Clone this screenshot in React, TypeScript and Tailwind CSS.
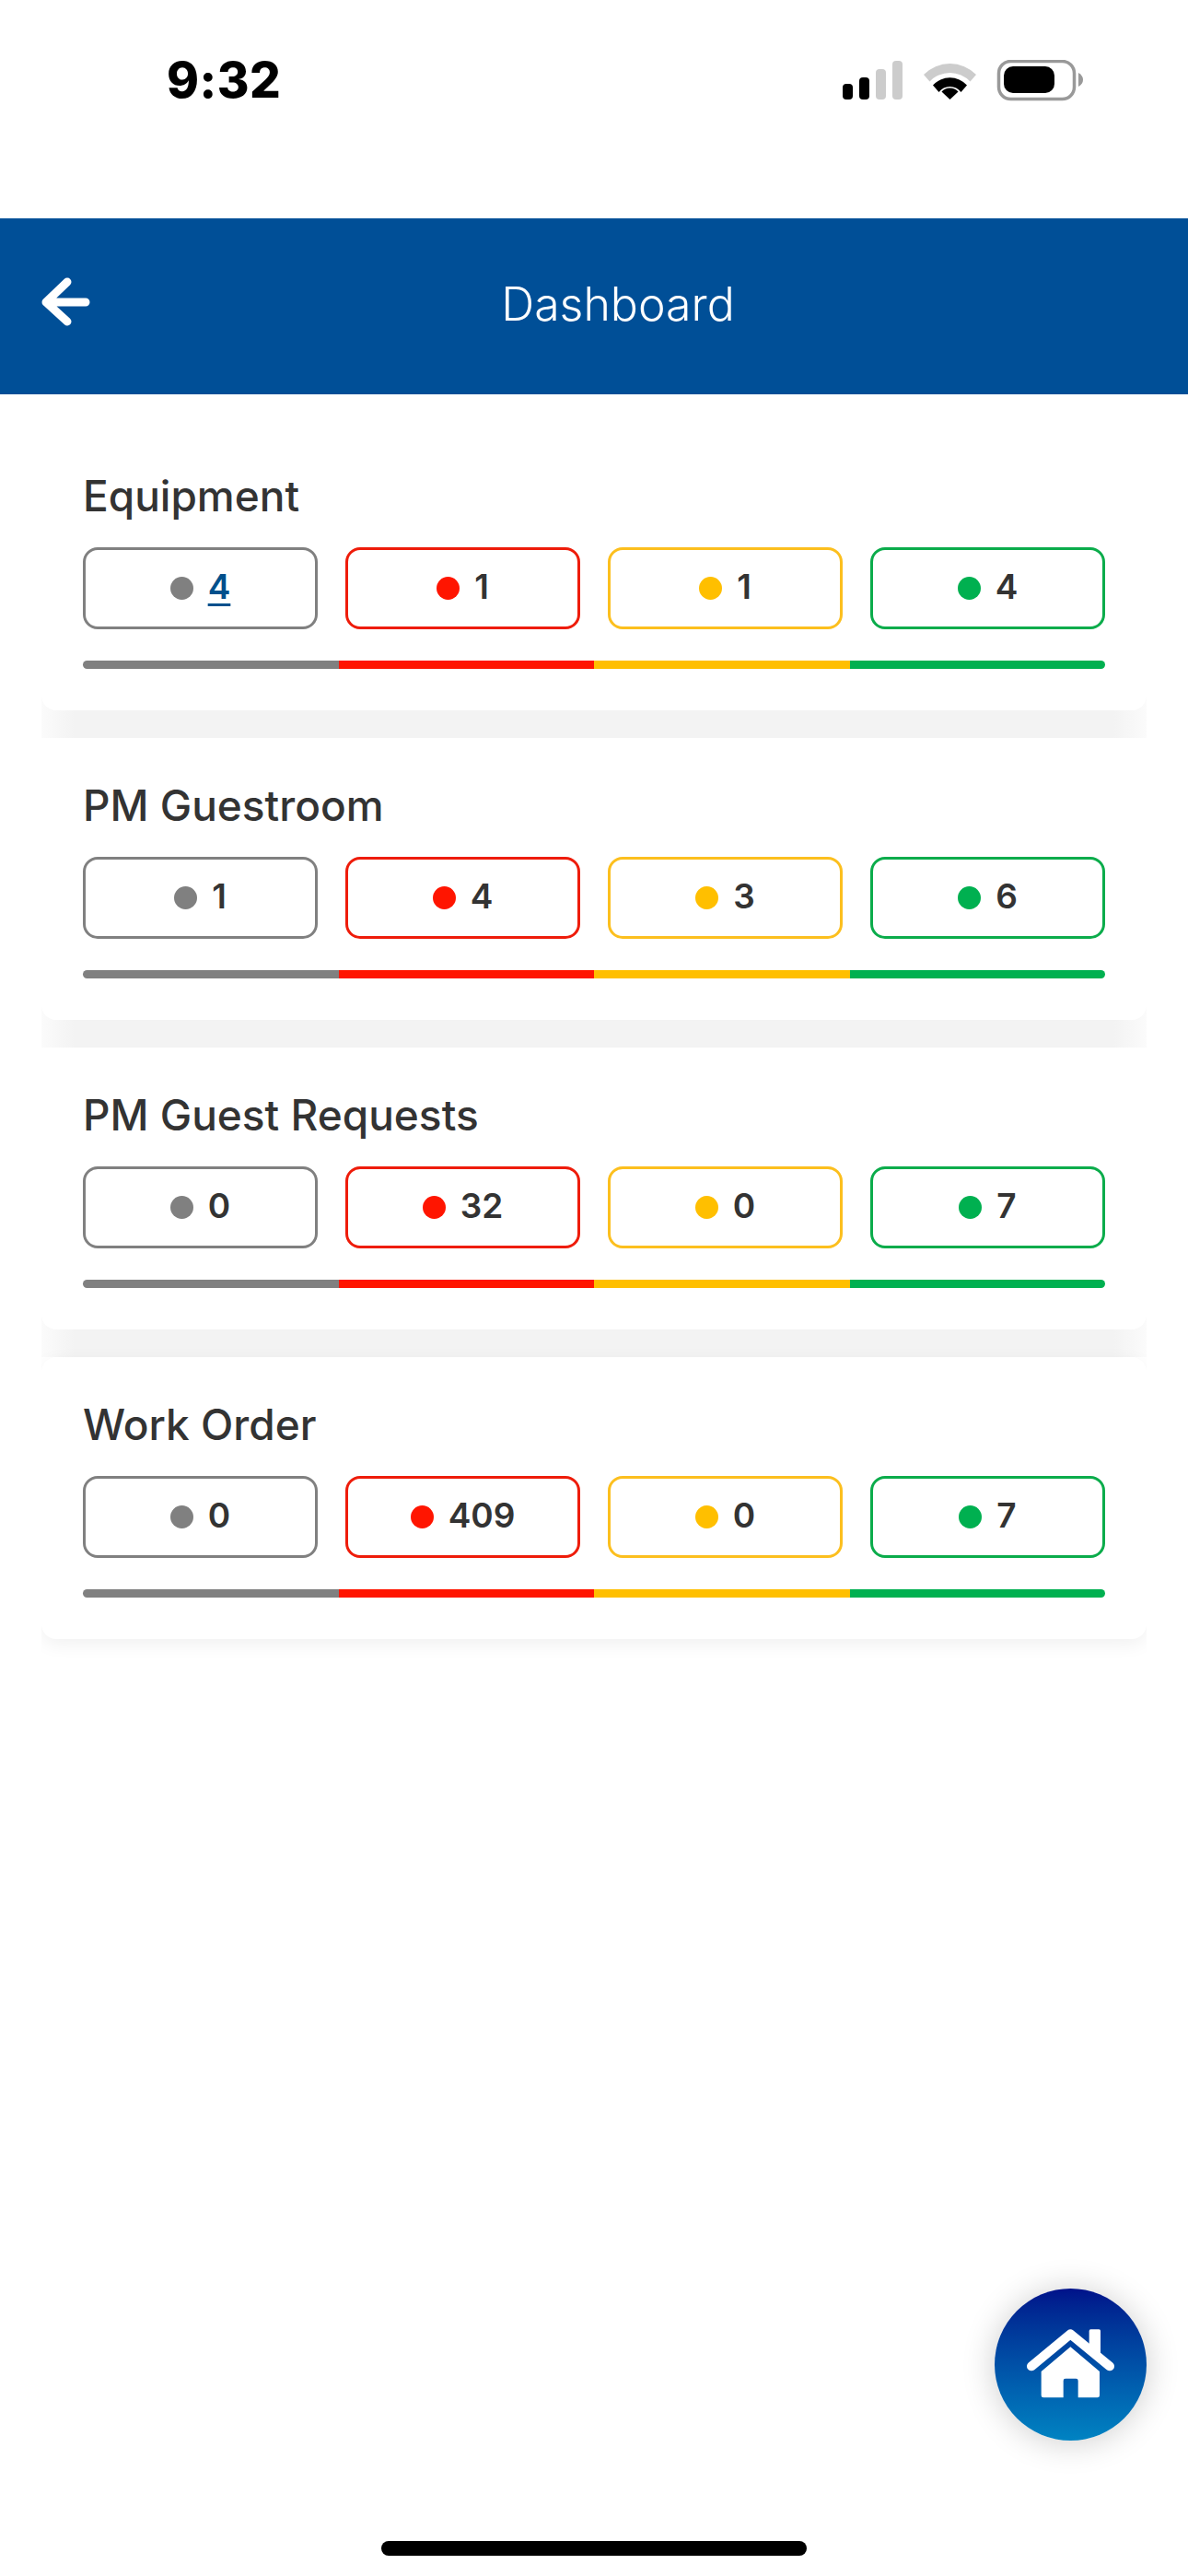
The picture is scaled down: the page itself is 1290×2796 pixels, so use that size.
const cards = [
  { title: "Equipment", vals: ["4", "1", "1", "4"], link: true },
  { title: "PM Guestroom", vals: ["1", "4", "3", "6"] },
  { title: "PM Guest Requests", vals: ["0", "32", "0", "7"] },
  { title: "Work Order", vals: ["0", "409", "0", "7"] },
];
const tones = [
  { border: "border-[#808080]", dot: "bg-[#808080]", bar: "bg-[#808080] rounded-l-[5px]" },
  { border: "border-[#ee1c0a]", dot: "bg-[#ff1500]", bar: "bg-[#ff1500]" },
  { border: "border-[#fcbf1e]", dot: "bg-[#ffbf00]", bar: "bg-[#ffbf00]" },
  { border: "border-[#0bac4b]", dot: "bg-[#00b050]", bar: "bg-[#00b050] rounded-r-[5px]" },
];

function StatusIcons() {
  return (
    <svg width="264" height="46" viewBox="0 0 264 46" className="block">
      <rect x="1" y="26" width="11" height="17" rx="4" fill="#000" />
      <rect x="19" y="19" width="11" height="24" rx="4" fill="#000" />
      <rect x="37" y="10" width="11" height="33" rx="4" fill="#cccccc" />
      <rect x="55" y="1" width="11" height="42" rx="4" fill="#cccccc" />
      <path d="M89 16 A40 40 0 0 1 146 16 L139.500 23.500 A30 30 0 0 0 95.500 23.500 Z" fill="#cccccc" />
      <path d="M99 27.500 A25 25 0 0 1 136 27.500 L129.500 35 A15 15 0 0 0 105.500 35 Z" fill="#000" />
      <path d="M117.500 43 L108.500 34.500 A12 12 0 0 1 126.500 34.500 Z" fill="#000" />
      <rect x="170.500" y="1.500" width="82" height="41" rx="13" fill="none" stroke="#999999" strokeWidth="3.500" />
      <rect x="176" y="7" width="55" height="29" rx="10" fill="#000" />
      <path d="M257 14 Q262 17 262 21.500 Q262 26 257 29 Z" fill="#999999" />
    </svg>
  );
}

function Card({ title, vals, link, last }: { title: string; vals: string[]; link?: boolean; last: boolean }) {
  return (
    <div className={`relative z-10 flex h-[306px] flex-col rounded-[16px] bg-white px-[45px] pt-[43px] ${last ? "shadow-[0_6px_20px_rgba(0,0,0,0.06)]" : ""}`}>
      <div className="h-[60px] text-[46px] leading-[60px] font-medium text-[#333333]">{title}</div>
      <div className="mt-[26px] grid grid-cols-4 gap-x-[30px]">
        {vals.map((v, i) => (
          <div key={i} className={`flex h-[89px] items-center justify-center gap-[16px] rounded-[16px] border-[3px] bg-white ${tones[i].border}`}>
            <span className={`h-[25px] w-[25px] rounded-full ${tones[i].dot}`} />
            <span className={`-mt-[3px] text-[37px] leading-[44px] font-semibold ${link && i === 0 ? "text-[#00508c] underline underline-offset-[5px]" : "text-[#333333]"}`}>{v}</span>
          </div>
        ))}
      </div>
      <div className="mt-[34px] flex h-[9px]">
        {tones.map((t, i) => (
          <div key={i} className={`flex-1 ${t.bar}`} />
        ))}
      </div>
    </div>
  );
}

export default function App() {
  return (
    <div className="relative h-[2796px] w-[1290px] overflow-hidden bg-white font-['Inter',sans-serif]">
      <div className="flex h-[237px] items-start justify-between pt-[64px] pr-[112px] pl-[181px]">
        <div className="text-[53px] leading-[46px] font-extrabold tracking-[0.5px] text-black">9:32</div>
        <div className="mt-[1px]"><StatusIcons /></div>
      </div>
      <div className="relative flex h-[191px] items-center justify-center bg-[#004f97]">
        <svg width="60" height="60" viewBox="0 0 60 60" className="absolute top-[61px] left-[42px]">
          <path d="M8 30 L31 8 M8 30 L31 51 M8 30 H51" fill="none" stroke="#fff" strokeWidth="9" strokeLinecap="round" strokeLinejoin="round" />
        </svg>
        <div className="ml-[52px] -mt-[5px] text-[50px] leading-[60px] font-light text-white">Dashboard</div>
      </div>
      <div className="mx-[45px] mt-[37px] flex flex-col overflow-hidden pb-[40px]">
        {cards.map((c, i) => (
          <div key={c.title}>
            <Card title={c.title} vals={c.vals} link={c.link} last={i === cards.length - 1} />
            {i < cards.length - 1 && (
              <div className="-mt-[16px] h-[46px] bg-[linear-gradient(90deg,#fbfbfb,#f3f3f3_36px,#f3f3f3_calc(100%-36px),#fbfbfb)]" />
            )}
          </div>
        ))}
      </div>
      <div className="absolute top-[2484px] left-[1080px] flex h-[165px] w-[165px] items-center justify-center rounded-full bg-gradient-to-b from-[#00118a] to-[#0083c2] shadow-[0_2px_36px_rgba(0,0,0,0.2)]">
        <svg width="165" height="165" viewBox="120 132 495 495">
          <path d="M240 385 L367 280 L495 385" fill="none" stroke="#fff" strokeWidth="30" strokeLinecap="round" strokeLinejoin="round" />
          <rect x="428" y="265" width="37" height="80" rx="5" fill="#fff" />
          <path d="M272 402 L367 322 L462 402 V480 Q462 487 455 487 H392 V432 Q392 425 385 425 H351 Q344 425 344 432 V487 H279 Q272 487 272 480 Z" fill="#fff" />
        </svg>
      </div>
      <div className="absolute top-[2758px] left-[414px] h-[16px] w-[462px] rounded-full bg-black" />
    </div>
  );
}
